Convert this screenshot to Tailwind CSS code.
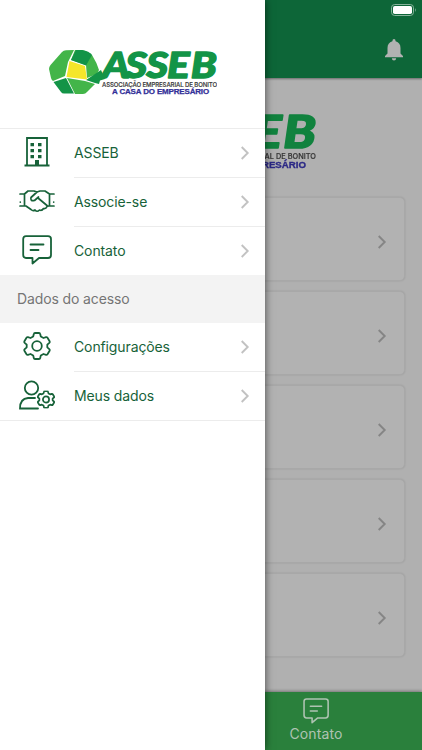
<!DOCTYPE html>
<html lang="pt-BR">
<head>
<meta charset="utf-8">
<title>ASSEB</title>
<script src="https://cdn.jsdelivr.net/npm/@tailwindcss/browser@4"></script>
</head>
<body class="font-['Inter','Liberation_Sans',sans-serif]">
<svg class="hidden">
  <symbol id="logo" viewBox="0 0 168 46">
    <path d="M0 19Q0 17 1.500 15L13 2Q14.500 .3 17 .2L25 0L19 12L16 26L4 31Q2.500 30 2 28Z" fill="#43b549"/>
    <path d="M26 0H33Q40 2 43 5Q48 13 50 20L48 24L38 28L37 15L22 10Z" fill="#43b549"/>
    <path d="M22 10L27 0H33Q40 1 43 5L37 15.500Z" fill="#139447"/>
    <path d="M4.500 32L17 28L25 43.500H15Q13 43.500 12 42Z" fill="#139447"/>
    <path d="M18 28L36 31L46 34L38 42Q36.500 44 34 44H26Z" fill="#43b549"/>
    <path d="M37 30L52 20L56 29L51 30.500L50 34L46 33Z" fill="#139447"/>
    <path d="M20.500 11L36 16L38 29.500L17.500 27Z" fill="#f5e62a"/>
    <text transform="translate(53 27.6) scale(1.16 1)" x="0 20 38.2 56 76.500" y="0" font-family="Lato, sans-serif" font-weight="900" font-style="italic" font-size="36.5" fill="#139447" stroke="#139447" stroke-width="1.3" stroke-linejoin="round">ASSEB</text>
    <text x="53" y="36.700" font-family="Inter, sans-serif" font-size="6.5" font-weight="500" fill="#3b3b3b" stroke="#3b3b3b" stroke-width=".15" textLength="115" lengthAdjust="spacingAndGlyphs">ASSOCIAÇÃO EMPRESARIAL DE BONITO</text>
    <text x="63" y="44" font-family="Liberation Sans, sans-serif" font-size="7" font-weight="700" fill="#322f98" stroke="#322f98" stroke-width=".25" textLength="97" lengthAdjust="spacingAndGlyphs">A CASA DO EMPRESÁRIO</text>
  </symbol>
  <symbol id="chev" viewBox="0 0 10 14"><path d="M1.700 1L7.700 7L1.700 13" fill="none" stroke="currentColor" stroke-width="1.9"/></symbol>
  <symbol id="chat" viewBox="0 0 30 30"><path d="M4 1.200H26Q29 1.200 29 4V20Q29 23 26 23H17L10.500 28.500V23H4Q1.200 23 1.200 20V4Q1.200 1.200 4 1.200ZM8.500 9.500H21.500M8.500 15H16.500" fill="none" stroke="currentColor" stroke-width="1.8" stroke-linecap="round" stroke-linejoin="round"/></symbol>
  <symbol id="gear" viewBox="0 0 28 28"><g fill="none" stroke="currentColor" stroke-linejoin="round"><path d="M12 1H16Q17 1 17.200 2L17.800 4.500L20.500 6L23 5.200Q24 5 24.500 5.800L26.600 9.300Q27 10.200 26.300 10.900L24.300 12.700V15.300L26.300 17.100Q27 17.800 26.600 18.700L24.500 22.200Q24 23 23 22.800L20.500 22L17.800 23.500L17.200 26Q17 27 16 27H12Q11 27 10.800 26L10.200 23.500L7.500 22L5 22.800Q4 23 3.500 22.200L1.400 18.700Q1 17.800 1.700 17.100L3.700 15.300V12.700L1.700 10.900Q1 10.200 1.400 9.300L3.500 5.800Q4 5 5 5.200L7.500 6L10.200 4.500L10.800 2Q11 1 12 1Z"/><circle cx="14" cy="14" r="4.800"/></g></symbol>
</svg>
<div class="relative w-[422px] h-[750px] overflow-hidden bg-[#b0b0b0]">
  <div class="flex flex-col h-full">
    <header class="h-[78px] shrink-0 bg-[#0d6638] shadow-[0_1px_2px_#0006] flex flex-col items-end">
      <svg class="w-[26px] h-[12px] mt-[4px] mr-[5px]" viewBox="0 0 26 12"><rect x=".5" y=".5" width="22" height="11" rx="3.200" fill="none" stroke="#86b39b"/><rect x="2" y="2" width="19" height="8" rx="1.800" fill="#fff"/><path d="M24 4Q25.800 6 24 8Z" fill="#86b39b"/></svg>
      <svg class="w-[18px] h-[22px] mt-[23px] mr-[19px]" viewBox="0 0 18 22"><path d="M9 0Q10.600 0 10.600 2.300Q15.500 3.700 15.500 9V14.500L18 17V18.200H0V17L2.500 14.500V9Q2.500 3.700 7.400 2.300Q7.400 0 9 0ZM6.800 19.300H11.200Q11 21.500 9 21.500Q7 21.500 6.800 19.300Z" fill="#b2b2b2"/></svg>
    </header>
    <main class="flex-1 flex flex-col items-center pt-[35px]">
      <svg class="w-[210px] h-[58px] shrink-0 brightness-[.88]"><use href="#logo"/></svg>
      <div class="self-stretch pl-[17px] pr-[17px] pt-[26px] flex flex-col gap-[10px] text-[#858585]">
        <div class="h-[84px] rounded-[5px] bg-[#b2b2b2] border border-[#a8a8a8] shadow-[0_0_2px_#0002] flex items-center justify-end pr-[17px] pt-[6px]"><svg class="w-[10px] h-[14px]"><use href="#chev"/></svg></div>
        <div class="h-[84px] rounded-[5px] bg-[#b2b2b2] border border-[#a8a8a8] shadow-[0_0_2px_#0002] flex items-center justify-end pr-[17px] pt-[6px]"><svg class="w-[10px] h-[14px]"><use href="#chev"/></svg></div>
        <div class="h-[84px] rounded-[5px] bg-[#b2b2b2] border border-[#a8a8a8] shadow-[0_0_2px_#0002] flex items-center justify-end pr-[17px] pt-[6px]"><svg class="w-[10px] h-[14px]"><use href="#chev"/></svg></div>
        <div class="h-[84px] rounded-[5px] bg-[#b2b2b2] border border-[#a8a8a8] shadow-[0_0_2px_#0002] flex items-center justify-end pr-[17px] pt-[6px]"><svg class="w-[10px] h-[14px]"><use href="#chev"/></svg></div>
        <div class="h-[84px] rounded-[5px] bg-[#b2b2b2] border border-[#a8a8a8] shadow-[0_0_2px_#0002] flex items-center justify-end pr-[17px] pt-[6px]"><svg class="w-[10px] h-[14px]"><use href="#chev"/></svg></div>
      </div>
    </main>
    <footer class="h-[58px] shrink-0 bg-[#2a803c] shadow-[0_-1px_3px_#0005] flex justify-end pr-[53px] text-[#afc3b2]">
      <div class="w-[106px] flex flex-col items-center pt-[6px]">
        <svg class="w-[26px] h-[26px]" viewBox="0 0 30 30"><use href="#chat" width="30" height="30"/></svg>
        <span class="text-[14px] leading-[18px] mt-[1px] tracking-[.1px]">Contato</span>
      </div>
    </footer>
  </div>

  <aside class="absolute left-0 top-0 w-[265px] h-full bg-white shadow-[0_0_8px_#0009] text-[#176239] text-[14px] tracking-[-.12px]">
    <div class="h-[129px] pt-[50px] pl-[49px] border-b border-[#ececec]"><svg class="w-[168px] h-[46px]"><use href="#logo"/></svg></div>
    <nav>
      <a class="flex h-[49px]"><span class="w-[74px] flex items-center justify-center pb-[3px]"><svg class="w-[26px] h-[30px]" viewBox="0 0 26 30"><path d="M3 28V1H23V28M.500 28.500H25.500" fill="none" stroke="currentColor" stroke-width="1.800"/><path d="M6.500 6H10V9.200H6.500ZM14 6H17.500V9.200H14ZM6.500 12H10V15.200H6.500ZM14 12H17.500V15.200H14ZM6.500 18H10V21.200H6.500ZM14 18H17.500V21.200H14ZM11 23H15V28H11Z" fill="currentColor"/></svg></span><span class="flex-1 flex items-center justify-between pr-[15px] border-b border-[#ececec]"><span class="pb-[2px]">ASSEB</span><svg class="w-[10px] h-[14px] text-[#c2c2c2]"><use href="#chev"/></svg></span></a>
      <a class="flex h-[49px]"><span class="w-[74px] flex items-center justify-center pb-[3px]"><svg class="w-[36px] h-[24px]" viewBox="0 0 36 24" fill="none" stroke="currentColor" stroke-width="1.700" stroke-linejoin="round" stroke-linecap="round"><path d="M1 5H5.500L9 2H15L18 3L21 2H26L30.500 5H35M1 17H7L12 20.500Q14 22.500 16 21Q18 23.500 20.500 21Q23 22 24.500 19.500Q27 20 28 17.500L29.500 17H35M5.500 5V17M30.500 5V17M18 3L12 8.500Q11 12.500 15.500 11.500L19.500 8M19 9L28 16.500M1.300 13V13.100M34.700 13V13.100"/></svg></span><span class="flex-1 flex items-center justify-between pr-[15px] border-b border-[#ececec]"><span class="pb-[2px]">Associe-se</span><svg class="w-[10px] h-[14px] text-[#c2c2c2]"><use href="#chev"/></svg></span></a>
      <a class="flex h-[48px]"><span class="w-[74px] flex items-center justify-center pb-[2px]"><svg class="w-[30px] h-[30px]"><use href="#chat"/></svg></span><span class="flex-1 flex items-center justify-between pr-[15px]"><span class="pb-[2px]">Contato</span><svg class="w-[10px] h-[14px] text-[#c2c2c2]"><use href="#chev"/></svg></span></a>
      <div class="h-[48px] bg-[#f3f3f3] text-[#757575] flex items-center pl-[17px] pb-[2px]">Dados do acesso</div>
      <a class="flex h-[49px]"><span class="w-[74px] flex items-center justify-center pb-[3px]"><svg class="w-[28px] h-[28px]" stroke-width="1.800"><use href="#gear"/></svg></span><span class="flex-1 flex items-center justify-between pr-[15px] border-b border-[#ececec]"><span class="pb-[2px]">Configurações</span><svg class="w-[10px] h-[14px] text-[#c2c2c2]"><use href="#chev"/></svg></span></a>
      <a class="flex h-[49px] border-b border-[#ececec]"><span class="w-[74px] flex items-center justify-center pb-[2px]"><svg class="w-[36px] h-[30px]" viewBox="0 0 36 30"><g fill="none" stroke="currentColor" stroke-width="1.800" stroke-linecap="round"><circle cx="12.500" cy="8" r="6.700"/><path d="M16 18H9Q1 18.500 1 28.500H19"/></g><svg x="18" y="10.500" width="18" height="18" viewBox="0 0 28 28" stroke-width="2.700"><use href="#gear" width="28" height="28"/></svg></svg></span><span class="flex-1 flex items-center justify-between pr-[15px]"><span class="pb-[2px]">Meus dados</span><svg class="w-[10px] h-[14px] text-[#c2c2c2]"><use href="#chev"/></svg></span></a>
    </nav>
  </aside>
</div>
</body>
</html>
